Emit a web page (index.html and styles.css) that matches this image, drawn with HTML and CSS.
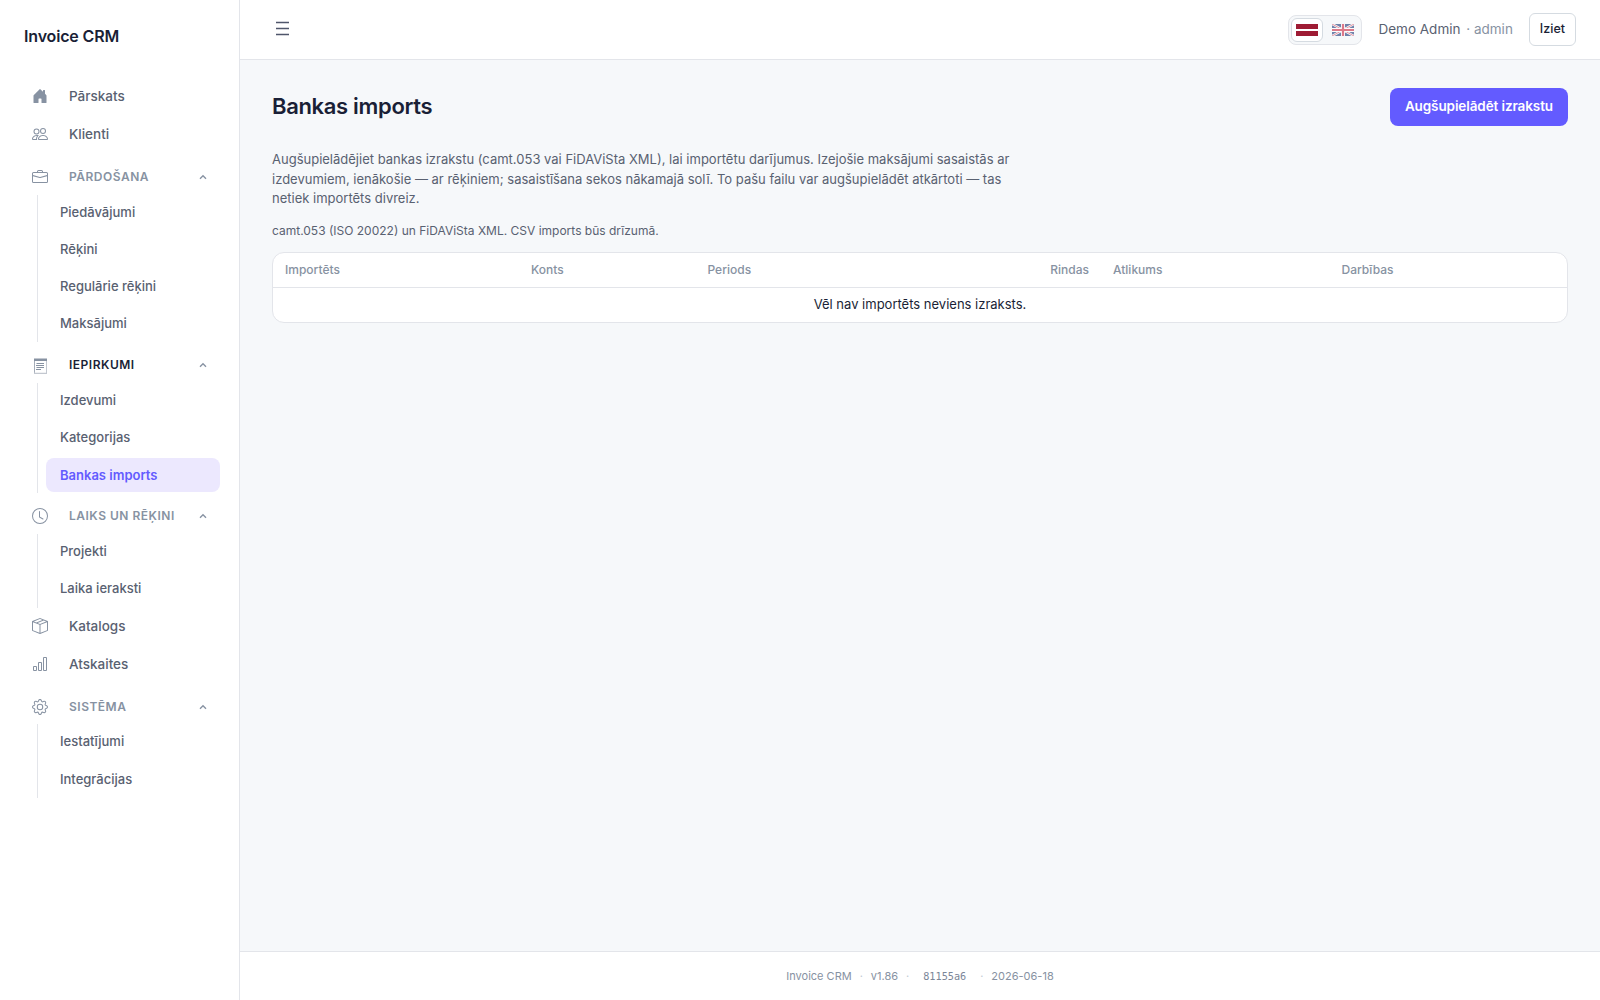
FILE: index.html
```html
<!DOCTYPE html>
<html lang="lv">
<head>
<meta charset="utf-8">
<title>Bankas imports</title>
<link rel="stylesheet" href="styles.css">
</head>
<body>
<div class="app">
  <aside class="sidebar">
    <div class="brand">Invoice CRM</div>
    <nav class="nav">
      <a class="nav-item"><svg class="icon" viewBox="0 0 16 16"><path d="M6.5 14.5v-3.505c0-.245.25-.495.5-.495h2c.25 0 .5.25.5.5v3.5a.5.5 0 0 0 .5.5h4a.5.5 0 0 0 .5-.5v-7a.5.5 0 0 0-.146-.354L13 5.793V2.5a.5.5 0 0 0-.5-.5h-1a.5.5 0 0 0-.5.5v1.293L8.354 1.146a.5.5 0 0 0-.708 0l-6 6A.5.5 0 0 0 1.5 7.5v7a.5.5 0 0 0 .5.5h4a.5.5 0 0 0 .5-.5"/></svg>Pārskats</a>
      <a class="nav-item"><svg class="icon" viewBox="0 0 16 16"><path d="M15 14s1 0 1-1-1-4-5-4-5 3-5 4 1 1 1 1zm-7.978-1L7 12.996c.001-.264.167-1.03.76-1.72C8.312 10.629 9.282 10 11 10c1.717 0 2.687.63 3.24 1.276.593.69.758 1.457.76 1.72l-.008.002-.014.002zM11 7a2 2 0 1 0 0-4 2 2 0 0 0 0 4m3-2a3 3 0 1 1-6 0 3 3 0 0 1 6 0M6.936 9.28a6 6 0 0 0-1.23-.247A7 7 0 0 0 5 9c-4 0-5 3-5 4q0 1 1 1h4.216A2.24 2.24 0 0 1 5 13c0-1.01.377-2.042 1.09-2.904.243-.294.526-.569.846-.816M4.92 10A5.5 5.5 0 0 0 4 13H1c0-.26.164-1.03.76-1.724.545-.636 1.492-1.256 3.16-1.275ZM1.5 5.5a3 3 0 1 1 6 0 3 3 0 0 1-6 0m3-2a2 2 0 1 0 0 4 2 2 0 0 0 0-4"/></svg>Klienti</a>

      <div class="nav-group"><svg class="icon" viewBox="0 0 16 16"><path d="M6.5 1A1.5 1.5 0 0 0 5 2.5V3H1.5A1.5 1.5 0 0 0 0 4.5v8A1.5 1.5 0 0 0 1.5 14h13a1.5 1.5 0 0 0 1.5-1.5v-8A1.5 1.5 0 0 0 14.5 3H11v-.5A1.5 1.5 0 0 0 9.5 1zm0 1h3a.5.5 0 0 1 .5.5V3H6v-.5a.5.5 0 0 1 .5-.5m1.886 6.914L15 7.151V12.5a.5.5 0 0 1-.5.5h-13a.5.5 0 0 1-.5-.5V7.15l6.614 1.764a1.5 1.5 0 0 0 .772 0M1.5 4h13a.5.5 0 0 1 .5.5v1.616L8.129 7.948a.5.5 0 0 1-.258 0L1 6.116V4.5a.5.5 0 0 1 .5-.5"/></svg><span>Pārdošana</span><svg class="chevron" viewBox="0 0 8 6"><path d="M1 4.7 4 1.7l3 3"/></svg></div>
      <div class="subnav" style="--items: 4">
        <a class="sub-item">Piedāvājumi</a>
        <a class="sub-item">Rēķini</a>
        <a class="sub-item">Regulārie rēķini</a>
        <a class="sub-item">Maksājumi</a>
      </div>

      <div class="nav-group current"><svg class="icon receipt" viewBox="0 0 16 16"><path opacity=".5" d="M2 0h13v1H2zM14 3h1v13h-1zM2 14.7h12V16H2z"/><path d="M2 1h13v2H2z"/><path opacity=".75" d="M2 3h1v11.7H2z"/><path d="M4.5 5h7.5v1H4.5zM4 7h8v1H4zM4.5 9h7.5v1H4.5zM4 11h5v1H4z"/></svg><span>Iepirkumi</span><svg class="chevron" viewBox="0 0 8 6"><path d="M1 4.7 4 1.7l3 3"/></svg></div>
      <div class="subnav" style="--items: 3">
        <a class="sub-item">Izdevumi</a>
        <a class="sub-item">Kategorijas</a>
        <a class="sub-item active">Bankas imports</a>
      </div>

      <div class="nav-group"><svg class="icon" viewBox="0 0 16 16"><path d="M8 3.5a.5.5 0 0 0-1 0V9a.5.5 0 0 0 .252.434l3.5 2a.5.5 0 0 0 .496-.868L8 8.71z"/><path d="M8 16A8 8 0 1 0 8 0a8 8 0 0 0 0 16m7-8A7 7 0 1 1 1 8a7 7 0 0 1 14 0"/></svg><span>Laiks un rēķini</span><svg class="chevron" viewBox="0 0 8 6"><path d="M1 4.7 4 1.7l3 3"/></svg></div>
      <div class="subnav" style="--items: 2">
        <a class="sub-item">Projekti</a>
        <a class="sub-item">Laika ieraksti</a>
      </div>

      <a class="nav-item"><svg class="icon" viewBox="0 0 16 16"><path d="M8.186 1.113a.5.5 0 0 0-.372 0L1.846 3.5l2.404.961L10.404 2zm3.564 1.426L5.596 5 8 5.961 14.154 3.5zm3.25 1.7-6.5 2.6v7.922l6.5-2.6V4.24zM7.5 14.762V6.838L1 4.239v7.923zM7.443.184a1.5 1.5 0 0 1 1.114 0l7.129 2.852A.5.5 0 0 1 16 3.5v8.662a1 1 0 0 1-.629.928l-7.185 2.874a.5.5 0 0 1-.372 0L.63 13.09a1 1 0 0 1-.63-.928V3.5a.5.5 0 0 1 .314-.464z"/></svg>Katalogs</a>
      <a class="nav-item"><svg class="icon" viewBox="0 0 16 16"><path d="M4 11H2v3h2zm5-4H7v7h2zm5-5v12h-2V2zm-2-1a1 1 0 0 0-1 1v12a1 1 0 0 0 1 1h2a1 1 0 0 0 1-1V2a1 1 0 0 0-1-1zM6 7a1 1 0 0 1 1-1h2a1 1 0 0 1 1 1v7a1 1 0 0 1-1 1H7a1 1 0 0 1-1-1zm-5 4a1 1 0 0 1 1-1h2a1 1 0 0 1 1 1v3a1 1 0 0 1-1 1H2a1 1 0 0 1-1-1z"/></svg>Atskaites</a>

      <div class="nav-group"><svg class="icon" viewBox="0 0 16 16"><path d="M8 4.754a3.246 3.246 0 1 0 0 6.492 3.246 3.246 0 0 0 0-6.492M5.754 8a2.246 2.246 0 1 1 4.492 0 2.246 2.246 0 0 1-4.492 0"/><path d="M9.796 1.343c-.527-1.79-3.065-1.79-3.592 0l-.094.319a.873.873 0 0 1-1.255.52l-.292-.16c-1.64-.892-3.433.902-2.54 2.541l.159.292a.873.873 0 0 1-.52 1.255l-.319.094c-1.79.527-1.79 3.065 0 3.592l.319.094a.873.873 0 0 1 .52 1.255l-.16.292c-.892 1.64.901 3.434 2.541 2.54l.292-.159a.873.873 0 0 1 1.255.52l.094.319c.527 1.79 3.065 1.79 3.592 0l.094-.319a.873.873 0 0 1 1.255-.52l.292.16c1.64.893 3.434-.902 2.54-2.541l-.159-.292a.873.873 0 0 1 .52-1.255l.319-.094c1.79-.527 1.79-3.065 0-3.592l-.319-.094a.873.873 0 0 1-.52-1.255l.16-.292c.893-1.64-.902-3.433-2.541-2.54l-.292.159a.873.873 0 0 1-1.255-.52zm-2.633.283c.246-.835 1.428-.835 1.674 0l.094.319a1.873 1.873 0 0 0 2.693 1.115l.291-.16c.764-.415 1.6.42 1.184 1.185l-.159.292a1.873 1.873 0 0 0 1.116 2.692l.318.094c.835.246.835 1.428 0 1.674l-.319.094a1.873 1.873 0 0 0-1.115 2.693l.16.291c.415.764-.42 1.6-1.185 1.184l-.291-.159a1.873 1.873 0 0 0-2.693 1.116l-.094.318c-.246.835-1.428.835-1.674 0l-.094-.319a1.873 1.873 0 0 0-2.692-1.115l-.292.16c-.764.415-1.6-.42-1.184-1.185l.159-.291A1.873 1.873 0 0 0 1.945 8.93l-.319-.094c-.835-.246-.835-1.428 0-1.674l.319-.094A1.873 1.873 0 0 0 3.06 4.377l-.16-.292c-.415-.764.42-1.6 1.185-1.184l.292.159a1.873 1.873 0 0 0 2.692-1.115z"/></svg><span>Sistēma</span><svg class="chevron" viewBox="0 0 8 6"><path d="M1 4.7 4 1.7l3 3"/></svg></div>
      <div class="subnav" style="--items: 2">
        <a class="sub-item">Iestatījumi</a>
        <a class="sub-item">Integrācijas</a>
      </div>
    </nav>
  </aside>

  <div class="page">
    <header class="topbar">
      <svg class="menu" viewBox="0 0 13 13"><path d="M0 .5h13M0 6.5h13M0 12.5h13"/></svg>
      <div class="topbar-right">
        <div class="langs">
          <span class="lang selected"><svg class="flag" viewBox="0 0 22 12"><path fill="#9e1b34" d="M0 0h22v12H0z"/><path fill="#fff" d="M0 5h22v2H0z"/></svg></span>
          <span class="lang"><svg class="flag" viewBox="0 0 22 12"><path fill="#012169" d="M0 0h22v12H0z"/><path stroke="#fff" stroke-width="2.4" d="m0 0 22 12M22 0 0 12"/><path stroke="#c8102e" stroke-width=".8" d="m0 0 22 12M22 0 0 12"/><path stroke="#fff" stroke-width="4" d="M11 0v12M0 6h22"/><path stroke="#c8102e" stroke-width="2.2" d="M11 0v12M0 6h22"/></svg></span>
        </div>
        <div class="user">Demo Admin <span class="role">· admin</span></div>
        <button class="logout">Iziet</button>
      </div>
    </header>

    <main class="content">
      <div class="page-head">
        <h1>Bankas imports</h1>
        <button class="primary">Augšupielādēt izrakstu</button>
      </div>
      <p class="lead">Augšupielādējiet bankas izrakstu (camt.053 vai FiDAViSta XML), lai importētu darījumus. Izejošie maksājumi sasaistās ar izdevumiem, ienākošie — ar rēķiniem; sasaistīšana sekos nākamajā solī. To pašu failu var augšupielādēt atkārtoti — tas netiek importēts divreiz.</p>
      <p class="hint">camt.053 (ISO 20022) un FiDAViSta XML. CSV imports būs drīzumā.</p>
      <div class="card">
        <table class="imports">
          <colgroup><col class="c-date"><col class="c-account"><col class="c-period"><col class="c-rows"><col class="c-balance"><col></colgroup>
          <thead><tr><th>Importēts</th><th>Konts</th><th>Periods</th><th class="num">Rindas</th><th>Atlikums</th><th>Darbības</th></tr></thead>
          <tbody><tr><td colspan="6">Vēl nav importēts neviens izraksts.</td></tr></tbody>
        </table>
      </div>
    </main>

    <footer class="footer">
      <span>Invoice CRM</span><span class="dot">·</span><span>v1.86</span><span class="dot">·</span><code>81155a6</code><span class="dot">·</span><span>2026-06-18</span>
    </footer>
  </div>
</div>
</body>
</html>
```
FILE: styles.css
```css
* { box-sizing: border-box; }

body {
  margin: 0;
  font: 14px/1.5 Inter, "Noto Sans", sans-serif;
  color: #1a1f36;
  background: #f6f8fa;
}

button { font-family: inherit; }

.app { display: flex; height: 100vh; }

/* Sidebar */
.sidebar {
  flex: 0 0 240px;
  background: #fff;
  border-right: 1px solid #e3e5ea;
}
.brand {
  height: 78px;
  padding: 24px 24px 0;
  font-size: 16px;
  font-weight: 600;
  letter-spacing: -0.16px;
}
.nav-item, .nav-group {
  display: flex;
  align-items: center;
  gap: 21px;
  padding: 0 32px;
}
.nav-item {
  height: 37.7px;
  padding-bottom: 1.2px;
  color: #596171;
  font-size: 13.5px;
  font-weight: 500;
}
.nav-group {
  height: 35.4px;
  margin-top: 5.8px;
  color: #8792a2;
  font-size: 12px;
  font-weight: 600;
  letter-spacing: 0.5px;
  text-transform: uppercase;
}
.nav-group.current { color: #1a1f36; }
.icon {
  flex: none;
  width: 16px;
  height: 16px;
  fill: #8792a2;
}
.icon.receipt { margin-top: 2px; }
.chevron {
  width: 8px;
  height: 6px;
  margin-left: auto;
  fill: none;
  stroke: #8792a2;
  stroke-width: 1.4;
}
.subnav {
  display: grid;
  align-content: start;
  gap: 3.45px;
  height: calc(var(--items) * 36.75px);
  margin: 0 19px 0 37px;
  padding: 0.9px 0 0 8px;
  border-left: 1px solid #e3e5ea;
}
.sub-item {
  display: flex;
  align-items: center;
  height: 33.8px;
  padding-left: 14px;
  border-radius: 8px;
  color: #596171;
  font-size: 13px;
  font-weight: 500;
}
.sub-item.active {
  padding-top: 1px;
  background: #ece8fe;
  color: #635bff;
  font-weight: 600;
}

/* Top bar */
.page { flex: 1; display: flex; flex-direction: column; }
.topbar {
  display: flex;
  justify-content: space-between;
  align-items: center;
  height: 60px;
  padding: 0 24px 0 36px;
  background: #fff;
  border-bottom: 1px solid #e3e5ea;
}
.menu {
  width: 13px;
  height: 13px;
  margin-top: -2px;
  overflow: visible;
  stroke: #4f566b;
  stroke-width: 1.4;
}
.topbar-right { display: flex; align-items: center; gap: 16px; }
.langs {
  display: flex;
  gap: 4px;
  height: 30px;
  padding: 2px;
  border: 1px solid #e3e5ea;
  border-radius: 8px;
  background: #f6f8fa;
}
.lang {
  display: flex;
  align-items: center;
  padding: 0 4px;
  border: 1px solid transparent;
  border-radius: 6px;
}
.lang.selected { background: #fff; border-color: #d5dbe1; }
.flag { width: 22px; height: 12px; }
.lang:not(.selected) .flag { opacity: 0.55; }
.user { color: #596171; font-size: 13.5px; }
.role { margin-left: 2px; color: #8792a2; }
.logout {
  height: 33px;
  padding: 0 10px 2px;
  border: 1px solid #d5dbe1;
  border-radius: 6px;
  background: #fff;
  color: #1a1f36;
  font-size: 12.5px;
  font-weight: 500;
}

/* Content */
.content { flex: 1; padding: 28px 32px; }
.page-head {
  display: flex;
  justify-content: space-between;
  align-items: center;
}
h1 {
  margin: 0;
  padding-bottom: 2px;
  font-size: 22px;
  font-weight: 600;
  letter-spacing: -0.33px;
}
.primary {
  height: 38px;
  padding: 0 15px 2px;
  border: 0;
  border-radius: 8px;
  background: #635bff;
  color: #fff;
  font-size: 13.5px;
  font-weight: 600;
  letter-spacing: -0.1px;
}
.lead {
  max-width: 760px;
  margin: 24px 0 0;
  color: #596171;
  font-size: 13px;
  line-height: 19.5px;
}
.hint {
  margin: 13px 0 12px;
  color: #596171;
  font-size: 12px;
  line-height: 18px;
}
.card {
  overflow: hidden;
  border: 1px solid #e3e5ea;
  border-radius: 12px;
  background: #fff;
}
.imports {
  width: 100%;
  table-layout: fixed;
  border-collapse: separate;
  border-spacing: 0;
}
.c-date { width: 246px; }
.c-account { width: 176.5px; }
.c-period { width: 342.5px; }
.c-rows { width: 63px; }
.c-balance { width: 228.5px; }
th {
  height: 35px;
  padding: 0 12px;
  border-bottom: 1px solid #e3e5ea;
  color: #8792a2;
  font-size: 12px;
  font-weight: 500;
  text-align: left;
}
th.num { text-align: right; }
td {
  height: 34px;
  padding: 0 12px;
  font-size: 13px;
  text-align: center;
}

/* Footer */
.footer {
  display: flex;
  justify-content: center;
  align-items: center;
  gap: 8px;
  height: 49px;
  padding-top: 1px;
  background: #fff;
  border-top: 1px solid #e3e5ea;
  color: #8792a2;
  font-size: 11px;
}
.dot { color: #c1c9d2; }
code {
  padding: 0 6px 1px;
  color: #7b8698;
  font: 10.2px "DejaVu Sans Mono", monospace;
}
```
